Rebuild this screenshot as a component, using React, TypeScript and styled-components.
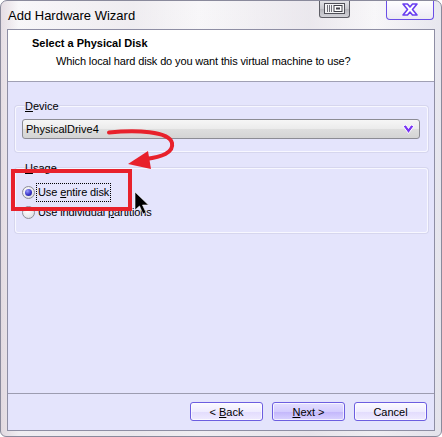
import React from "react";
import styled, { createGlobalStyle } from "styled-components";

const Global = createGlobalStyle`
  html, body { margin: 0; padding: 0; background: #ffffff; }
  body { font-family: "Liberation Sans", Arial, sans-serif; font-size: 11px; color: #000; }
  * { box-sizing: border-box; }
`;

const Window = styled.div`
  position: relative;
  width: 442px;
  height: 437px;
  border: 1px solid #8a8a9c;
  border-radius: 7px 7px 6px 6px;
  background:
    linear-gradient(90deg, rgba(214,200,210,0.55) 0%, rgba(245,243,246,0) 4%, rgba(230,226,232,0.5) 30%, rgba(250,248,250,0) 45%, rgba(226,222,230,0.6) 70%, rgba(248,246,248,0) 85%, rgba(220,220,232,0.6) 100%),
    linear-gradient(180deg, #f8f7f9 0%, #efedf1 100%);
  display: flex;
  flex-direction: column;
  overflow: hidden;
`;

const TitleBar = styled.div`
  height: 28px;
  display: flex;
  align-items: flex-start;
  padding-left: 7px;
`;

const Title = styled.div`
  font-family: "Liberation Sans", Arial, sans-serif;
  font-size: 13px;
  line-height: 13px;
  margin-top: 8px;
  color: #000;
  flex: 1;
`;

const RestoreBtn = styled.div`
  width: 31px;
  height: 18px;
  margin-top: -1px;
  border: 1px solid #5e5e66;
  border-top: none;
  border-radius: 0 0 3px 3px;
  background: linear-gradient(180deg, #e6e6ea 0%, #c9c9cf 50%, #b4b4ba 51%, #d2d2d8 100%);
  display: flex;
  align-items: center;
  justify-content: center;
  margin-right: 36px;
`;

const CloseBtn = styled.div`
  width: 48px;
  height: 20px;
  margin-top: -1px;
  margin-right: 7px;
  border: 1px solid #6a4ee6;
  border-top: none;
  border-radius: 0 0 4px 4px;
  background: linear-gradient(180deg, #ffffff 0%, #f6f4fb 50%, #ecebf2 100%);
  display: flex;
  align-items: center;
  justify-content: center;
`;

const Client = styled.div`
  margin: 0 6px 0 6px;
  height: 402px;
  border: 1px solid #8e8ea4;
  display: flex;
  flex-direction: column;
  background: #e4e4fc;
`;

const Header = styled.div`
  height: 52px;
  background: #ffffff;
  border-bottom: 1px solid #a0a0b4;
  padding: 6px 0 0 24px;
  display: flex;
  flex-direction: column;
`;

const HeaderTitle = styled.div`
  font-weight: bold;
  font-size: 11px;
  line-height: 14px;
`;

const HeaderSub = styled.div`
  font-size: 11px;
  line-height: 14px;
  margin-top: 4px;
  padding-left: 24px;
  letter-spacing: -0.13px;
`;

const Body = styled.div`
  flex: 1;
  padding: 18px 6px 0 7px;
  display: flex;
  flex-direction: column;
  gap: 10px;
`;

const Group = styled.fieldset<{ $h: number }>`
  margin: 0;
  height: ${(p) => p.$h}px;
  border: 1px solid #f7f7ff;
  box-shadow: 0 0 0 1px #d6d6ee;
  border-radius: 3px;
  padding: 6px 7px 0 6px;
  min-width: 0;
`;

const Legend = styled.legend`
  padding: 0 1px;
  margin-left: 2px;
  font-size: 11px;
  line-height: 13px;
`;

const Combo = styled.div`
  height: 20px;
  border: 1px solid #8c8c94;
  border-radius: 3px;
  background: linear-gradient(180deg, #f6f6f6 0%, #ebebeb 50%, #dedede 51%, #d4d4d4 100%);
  display: flex;
  align-items: center;
  padding-left: 3px;
  padding-right: 4px;
  font-size: 11px;
`;

const ComboText = styled.span`
  flex: 1;
`;

const RadioRow = styled.label`
  display: flex;
  align-items: center;
  height: 18px;
  margin-top: 2px;
  gap: 2px;
  font-size: 11px;
`;

const RadioDot = styled.span<{ $on?: boolean }>`
  width: 13px;
  height: 13px;
  border-radius: 50%;
  border: 1px solid #8d8d96;
  background: radial-gradient(circle at 40% 35%, #ffffff 0%, #e8e8ec 60%, #cfcfd6 100%);
  display: flex;
  align-items: center;
  justify-content: center;
  &::after {
    content: "";
    display: ${(p) => (p.$on ? "block" : "none")};
    width: 7px;
    height: 7px;
    border-radius: 50%;
    background: radial-gradient(circle at 35% 30%, #9a9cff 0%, #3a36c8 55%, #1c1a80 100%);
  }
`;

const RadioLabel = styled.span<{ $focus?: boolean }>`
  padding: 1px 1px;
  outline: ${(p) => (p.$focus ? "1px dotted #000" : "none")};
  outline-offset: 0;
  line-height: 15px;
  letter-spacing: -0.1px;
`;

const Footer = styled.div`
  height: 37px;
  border-top: 1px solid #9c9cb0;
  display: flex;
  justify-content: flex-end;
  align-items: flex-start;
  gap: 9px;
  padding: 8px 7px 0 0;
`;

const Button = styled.div<{ $default?: boolean }>`
  width: 73px;
  height: 19px;
  border: 1px solid #6c5ee0;
  border-radius: 3px;
  background: ${(p) =>
    p.$default
      ? "linear-gradient(180deg, #e4e0ff 0%, #d4ccff 50%, #c2b6fb 51%, #d9d2ff 100%)"
      : "linear-gradient(180deg, #fbfaff 0%, #efecff 50%, #e2dcfd 51%, #efeaff 100%)"};
  box-shadow: inset 0 0 0 1px rgba(255,255,255,0.7);
  display: flex;
  align-items: center;
  justify-content: center;
  font-size: 11px;
`;

const U = styled.span`
  text-decoration: underline;
`;

const Overlay = styled.svg`
  position: absolute;
  left: 0;
  top: 0;
  pointer-events: none;
`;

const RedBox = styled.div`
  position: absolute;
  left: 10px;
  top: 168px;
  width: 121px;
  height: 42px;
  border: 4px solid #e8212b;
`;

export default function App() {
  return (
    <>
      <Global />
      <Window>
        <TitleBar>
          <Title>Add Hardware Wizard</Title>
          <RestoreBtn>
            <svg width="21" height="11" viewBox="0 0 21 11">
              <rect x="0.5" y="0.5" width="20" height="10" fill="#f4f4f6" stroke="#505058" />
              <rect x="3" y="2" width="1" height="7" fill="#707078" />
              <rect x="5" y="2" width="1" height="7" fill="#707078" />
              <rect x="7" y="2" width="1" height="7" fill="#707078" />
              <rect x="10" y="2.5" width="8" height="6" fill="#ffffff" stroke="#404048" />
              <rect x="12" y="4.5" width="4" height="2" fill="#404048" />
            </svg>
          </RestoreBtn>
          <CloseBtn>
            <svg width="16" height="13" viewBox="0 0 16 13">
              <path
                d="M1 1 H5.5 L8 4 L10.5 1 H15 L10.5 6.5 L15 12 H10.5 L8 9 L5.5 12 H1 L5.5 6.5 Z"
                fill="#ffffff"
                stroke="#6a3ef0"
                strokeWidth="1.6"
                strokeLinejoin="round"
              />
            </svg>
          </CloseBtn>
        </TitleBar>
        <Client>
          <Header>
            <HeaderTitle>Select a Physical Disk</HeaderTitle>
            <HeaderSub>Which local hard disk do you want this virtual machine to use?</HeaderSub>
          </Header>
          <Body>
            <Group $h={52}>
              <Legend>
                <U>D</U>evice
              </Legend>
              <Combo>
                <ComboText>PhysicalDrive4</ComboText>
                <svg width="13" height="11" viewBox="0 0 13 11">
                  <path d="M1 2 L4 0.8 L6.5 4.5 L9 0.8 L12 2 L6.5 9.5 Z" fill="#7a36f4" stroke="#ffffff" strokeWidth="1" strokeLinejoin="round" />
                </svg>
              </Combo>
            </Group>
            <Group $h={71}>
              <Legend>
                <U>U</U>sage
              </Legend>
              <RadioRow>
                <RadioDot $on />
                <RadioLabel $focus>
                  Use <U>e</U>ntire disk
                </RadioLabel>
              </RadioRow>
              <RadioRow>
                <RadioDot />
                <RadioLabel>
                  Use individual <U>p</U>artitions
                </RadioLabel>
              </RadioRow>
            </Group>
          </Body>
          <Footer>
            <Button>
              &lt;&nbsp;<U>B</U>ack
            </Button>
            <Button $default>
              <U>N</U>ext &gt;
            </Button>
            <Button>Cancel</Button>
          </Footer>
        </Client>
        <RedBox />
        <Overlay width="442" height="437" viewBox="0 0 442 437">
          <path
            d="M108 131.5 C135 129 168 130 171 142 C173 152 160 156 145 158"
            fill="none"
            stroke="#e8212b"
            strokeWidth="4"
            strokeLinecap="round"
          />
          <polygon points="127,163 147,150 150,168" fill="#e8212b" />
          <path
            d="M134 191 L134 209 L138.5 205 L142 213 L145 211.5 L141.5 204 L147.5 204 Z"
            fill="#000000"
            stroke="#ffffff"
            strokeWidth="0.6"
          />
        </Overlay>
      </Window>
    </>
  );
}
